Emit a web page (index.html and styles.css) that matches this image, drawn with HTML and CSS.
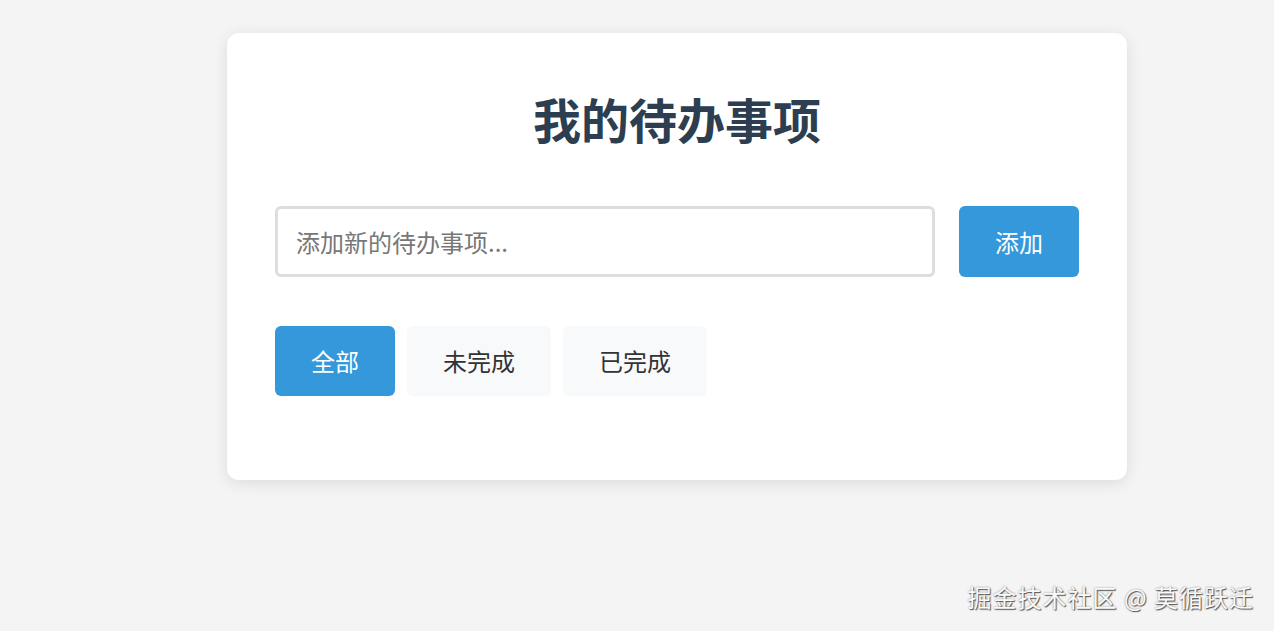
FILE: index.html
```html
<!DOCTYPE html>
<html lang="zh-CN">
<head>
<meta charset="UTF-8">
<title>我的待办事项</title>
<link rel="stylesheet" href="styles.css">
</head>
<body>
  <div class="card">
    <h1 class="title">我的待办事项</h1>
    <div class="add-row">
      <input class="todo-input" type="text" placeholder="添加新的待办事项...">
      <button class="btn-add">添加</button>
    </div>
    <div class="filters">
      <button class="filter active">全部</button>
      <button class="filter">未完成</button>
      <button class="filter">已完成</button>
    </div>
    <ul class="todo-list"></ul>
  </div>
  <div class="watermark">掘金技术社区 @ 莫循跃迁</div>
</body>
</html>
```

FILE: styles.css
```css
html, body {
  margin: 0;
  padding: 0;
}
body {
  background: #f4f4f4;
  font-family: "Noto Sans CJK SC", "Noto Sans", sans-serif;
  color: #333;
  min-height: 631px;
  position: relative;
  overflow: hidden;
}
.card {
  box-sizing: border-box;
  width: 900px;
  margin: 33px 0 0 227px;
  background: #fff;
  border-radius: 12px;
  box-shadow: 0 3px 15px rgba(0, 0, 0, 0.1);
  padding: 48px;
}
.title {
  margin: 3px 0 52px;
  text-align: center;
  font-size: 48px;
  font-weight: 700;
  color: #2c3e50;
  line-height: 1.45;
}
.add-row {
  display: flex;
  gap: 24px;
}
.todo-input {
  flex: 1;
  font-family: inherit;
  font-size: 24px;
  padding: 15px 18px;
  border: 3px solid #ddd;
  border-radius: 6px;
  color: #333;
  outline: none;
}
.todo-input::placeholder {
  color: #777;
}
.btn-add {
  font-family: inherit;
  font-size: 24px;
  line-height: 35px;
  padding: 18px 36px;
  border: none;
  border-radius: 6px;
  background: #3498db;
  color: #fff;
}
.filters {
  display: flex;
  gap: 12px;
  margin-top: 49px;
}
.filter {
  font-family: inherit;
  font-size: 24px;
  line-height: 34px;
  padding: 18px 36px;
  border: none;
  border-radius: 6px;
  background: #f8f9fa;
  color: #333;
}
.filter.active {
  background: #3498db;
  color: #fff;
}
.todo-list {
  list-style: none;
  margin: 36px 0 0;
  padding: 0;
}
.watermark {
  position: absolute;
  right: 20px;
  bottom: 17px;
  font-size: 24px;
  letter-spacing: 1px;
  color: #fafafa;
  text-shadow: 1px 1px 1px #555, 0 0 2px #888;
}
```
